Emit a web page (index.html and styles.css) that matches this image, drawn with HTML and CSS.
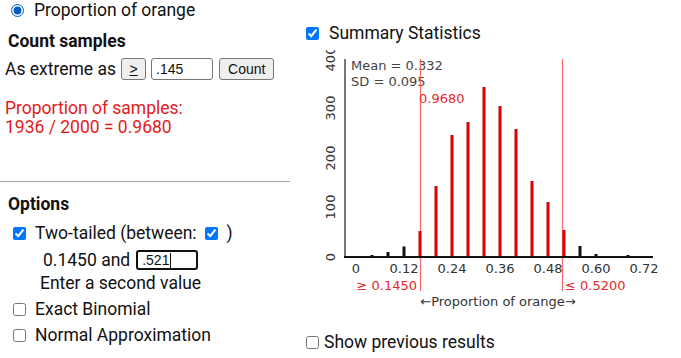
FILE: index.html
```html
<!DOCTYPE html>
<html lang="en">
<head>
  <meta charset="UTF-8">
  <title>One proportion</title>
  <link rel="stylesheet" href="styles.css">
</head>
<body>

<div class="page">
  <!-- Left: inputs -->
  <div class="left">
    <label class="row src"><input type="radio" name="src" checked> Proportion of orange</label>

    <h3 class="head">Count samples</h3>
    <div class="row extreme">
      As extreme as
      <button class="btn op"><u>&gt;</u></button>
      <input class="box" type="text" value=".145">
      <button class="btn">Count</button>
    </div>

    <div class="result">
      <div>Proportion of samples:</div>
      <div>1936 / 2000 = 0.9680</div>
    </div>

    <hr class="rule">

    <h3 class="head opt">Options</h3>
    <label class="row"><input type="checkbox" checked> Two-tailed (between: <input type="checkbox" checked class="inner">)</label>
    <div class="row second">0.1450 and <span class="box focus">.521<i class="caret"></i></span></div>
    <div class="row hint">Enter a second value</div>
    <label class="row"><input type="checkbox"> Exact Binomial</label>
    <label class="row"><input type="checkbox"> Normal Approximation</label>
  </div>

  <!-- Right: dotplot -->
  <div class="right">
    <label class="row stats"><input type="checkbox" checked> Summary Statistics</label>

    <svg class="chart" width="381" height="265" viewBox="300 50 381 265">
      <!-- y axis labels -->
      <g class="ylab">
        <text transform="translate(335,257) rotate(-90)">0</text>
        <text transform="translate(335,207) rotate(-90)">100</text>
        <text transform="translate(335,158) rotate(-90)">200</text>
        <text transform="translate(335,108) rotate(-90)">300</text>
        <text transform="translate(335,59) rotate(-90)">400</text>
      </g>
      <line x1="345" y1="59" x2="345" y2="258" stroke="#777" stroke-width="2"/>

      <text class="stat" x="351" y="70">Mean = 0.332</text>
      <text class="stat" x="351" y="86">SD = 0.095</text>

      <!-- cut-off lines -->
      <line x1="420.5" y1="59" x2="420.5" y2="291" stroke="#f56b6b" stroke-width="1.2"/>
      <line x1="562.5" y1="59" x2="562.5" y2="291" stroke="#f56b6b" stroke-width="1.2"/>
      <text class="red" x="419" y="103">0.9680</text>

      <g id="bars"></g>
      <line x1="344" y1="257" x2="653" y2="257" stroke="#111" stroke-width="2"/>

      <g class="tick">
        <text x="356" y="273">0</text>
        <text x="404" y="273">0.12</text>
        <text x="452" y="273">0.24</text>
        <text x="500" y="273">0.36</text>
        <text x="548" y="273">0.48</text>
        <text x="596" y="273">0.60</text>
        <text x="644" y="273">0.72</text>
      </g>
      <text class="red" x="417" y="290" text-anchor="end">≥ 0.1450</text>
      <text class="red" x="565" y="290">≤ 0.5200</text>
      <text class="axis" x="498" y="306" text-anchor="middle">←Proportion of orange→</text>
    </svg>

    <label class="row prev"><input type="checkbox"> Show previous results</label>
  </div>
</div>

<script>
  // proportion -> top of bar (px), red ones are in the tails window
  const bars = [
    [0.04, 255, false], [0.08, 252, false], [0.12, 246.5, false],
    [0.16, 231, true], [0.20, 186, true], [0.24, 135, true], [0.28, 122, true],
    [0.32, 87, true], [0.36, 106, true], [0.40, 129, true], [0.44, 181, true],
    [0.48, 202, true], [0.52, 230, true],
    [0.56, 246, false], [0.60, 254, false], [0.68, 255, false]
  ];

  const g = document.getElementById("bars");
  bars.forEach(([p, top, inside]) => {
    const x = 356 + 400 * p;
    const r = document.createElementNS("http://www.w3.org/2000/svg", "rect");
    r.setAttribute("x", x - 1.5);
    r.setAttribute("y", top);
    r.setAttribute("width", 3);
    r.setAttribute("height", 257 - top);
    r.setAttribute("fill", inside ? "#e00000" : "#111");
    g.appendChild(r);
  });
</script>

</body>
</html>
```

FILE: styles.css
```css
* { box-sizing: border-box; }

body {
  margin: 0;
  font-family: Roboto, "Liberation Sans", sans-serif;
  font-size: 17.5px;
  color: #111;
  background: white;
}

.page {
  display: flex;
}

.left {
  width: 300px;
}

.right {
  flex: 1;
}

.row {
  display: flex;
  align-items: center;
  height: 20px;
  white-space: nowrap;
}

input[type=checkbox], input[type=radio] {
  width: 13px;
  height: 13px;
  margin: 0 9px 0 13px;
}

.src input { margin: 0 10px 0 11px; }

.head {
  margin: 11px 0 0 8px;
  height: 20px;
  line-height: 20px;
  font-size: 17.5px;
  font-weight: bold;
}

.extreme {
  margin-top: 7px;
  height: 22px;
  padding-left: 5px;
}

.btn, .box {
  font-family: "Liberation Sans", Arial, sans-serif;
  font-size: 14px;
  height: 22px;
  border: 1px solid #767676;
  border-radius: 3px;
  color: #111;
}

.btn {
  background: #efefef;
  padding: 0 8px;
}

.op {
  width: 25px;
  margin: 0 5px 0 5px;
  padding: 0;
}

.extreme .box {
  width: 62px;
  padding: 0 4px;
  margin-right: 6px;
}

.result {
  margin: 19px 0 0 5px;
  line-height: 19px;
  color: #e21b1b;
}

.result div { height: 19px; }

.rule {
  margin: 44px 0 0 0;
  width: 290px;
  border: none;
  border-top: 1px solid #a4a4a4;
}

.head.opt {
  margin-top: 12px;
  margin-bottom: 9px;
}

.row input.inner { margin: 0 9px 0 8px; }

.second {
  margin-top: 7px;
  padding-left: 43px;
}

.box.focus {
  display: flex;
  align-items: center;
  width: 62px;
  height: 20px;
  margin-left: 6px;
  padding: 0 4px;
  border: 2px solid #111;
  border-radius: 3px;
}

.caret {
  width: 1px;
  height: 15px;
  background: #111;
  margin-left: 1px;
}

.hint {
  margin-top: 3px;
  padding-left: 40px;
}

.hint + .row { margin-top: 6px; }
.hint + .row + .row { margin-top: 6px; }

.stats {
  margin-top: 23px;
}

.stats input { margin: 0 10px 0 6px; }

.chart {
  display: block;
  margin-top: 7px;
  font-family: "DejaVu Sans", Verdana, sans-serif;
  font-size: 13px;
}

.ylab text { fill: #333; text-anchor: middle; }
.stat { fill: #444; }
.red { fill: #e42a2a; }
.tick text { fill: #333; text-anchor: middle; }
.axis { fill: #333; }

.prev {
  margin-top: 17px;
}

.prev input { margin: 0 5px 0 6px; }
```
